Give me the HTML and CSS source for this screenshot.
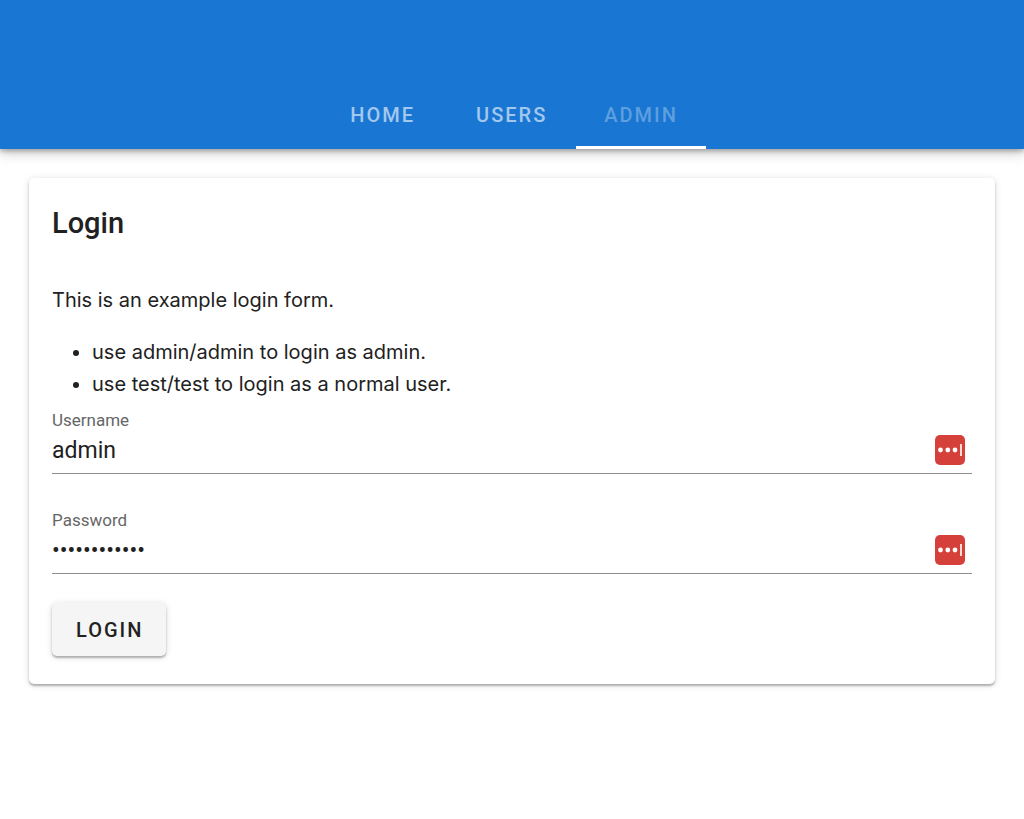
FILE: index.html
```html
<!DOCTYPE html>
<html lang="en">
<head>
<meta charset="utf-8">
<meta name="viewport" content="width=device-width, initial-scale=1">
<title>Login</title>
<link rel="stylesheet" href="styles.css">
</head>
<body>
<header class="app-bar">
  <nav class="tabs">
    <a class="tab" href="#home">HOME</a>
    <a class="tab" href="#users">USERS</a>
    <a class="tab tab-active" href="#admin" aria-current="page">ADMIN</a>
  </nav>
</header>
<main class="content">
  <form class="card">
    <h1 class="title">Login</h1>
    <p class="intro">This is an example login form.</p>
    <ul class="hints">
      <li>use admin/admin to login as admin.</li>
      <li>use test/test to login as a normal user.</li>
    </ul>
    <div class="fields">
      <div class="field">
        <label class="label" for="username">Username</label>
        <div class="control">
          <input class="input" id="username" type="text" value="admin">
          <svg class="manager" viewBox="0 0 30 30" aria-hidden="true"><rect width="30" height="30" rx="5" fill="#d6403a"/><circle cx="5.500" cy="15" r="2.400" fill="#fff"/><circle cx="12.800" cy="15" r="2.400" fill="#fff"/><circle cx="20" cy="15" r="2.400" fill="#fff"/><path d="M26 9V21" stroke="#fbd9d6" stroke-width="2"/></svg>
        </div>
      </div>
      <div class="field">
        <label class="label" for="password">Password</label>
        <div class="control">
          <input class="input" id="password" type="password" value="testpassword">
          <svg class="manager" viewBox="0 0 30 30" aria-hidden="true"><rect width="30" height="30" rx="5" fill="#d6403a"/><circle cx="5.500" cy="15" r="2.400" fill="#fff"/><circle cx="12.800" cy="15" r="2.400" fill="#fff"/><circle cx="20" cy="15" r="2.400" fill="#fff"/><path d="M26 9V21" stroke="#fbd9d6" stroke-width="2"/></svg>
        </div>
      </div>
    </div>
    <button class="button" type="button">LOGIN</button>
  </form>
</main>
</body>
</html>
```

FILE: styles.css
```css
* { box-sizing: border-box; }
body { margin: 0; background: #fff; color: #212121; font-family: Roboto, sans-serif; }
.app-bar { display: flex; justify-content: center; padding-top: 80px; background: #1976d2; box-shadow: 0 2px 5px rgba(0,0,0,.3), 0 5px 12px rgba(0,0,0,.16); }
.tabs { display: flex; }
.tab { min-width: 129px; padding: 24px 28px 19px; border-bottom: 3px solid transparent; color: #a3c8ed; font-size: 20px; line-height: 23px; font-weight: 500; letter-spacing: 2px; text-align: center; text-decoration: none; }
.tab-active { border-color: #fff; color: #5e9fdf; }
.content { padding: 29px; }
.card { padding: 24px 23px 28px; border-radius: 5px; box-shadow: 0 2px 2px rgba(0,0,0,.26), 0 1px 7px rgba(0,0,0,.14); }
.title { margin: 0 0 40px; font-size: 29px; line-height: 42px; font-weight: 500; }
.intro { margin: 0 0 20px; font-family: Inter, sans-serif; font-size: 20px; line-height: 32px; }
.hints { margin: 0 0 10px; padding-left: 40px; font-family: Inter, sans-serif; font-size: 20px; line-height: 32px; }
.fields { display: flex; flex-direction: column; gap: 36px; margin-bottom: 29px; }
.label { display: block; color: #666; font-size: 17px; line-height: 20px; }
.control { display: flex; align-items: flex-start; height: 44px; padding-right: 7px; border-bottom: 1px solid #8c8c8c; }
.input { flex: 1; min-width: 0; height: 40px; padding: 0; border: 0; outline: 0; background: transparent; color: #212121; font-family: Roboto, sans-serif; font-size: 23px; }
.manager { width: 30px; height: 30px; margin-top: 5px; }
.button { padding: 15px 23px 14px 24px; border: 0; border-radius: 5px; background: #f5f5f5; color: #212121; font-family: Roboto, sans-serif; font-size: 20px; line-height: 24px; font-weight: 500; letter-spacing: 2px; box-shadow: 0 2px 2px rgba(0,0,0,.26), 0 1px 7px rgba(0,0,0,.14); }
```
